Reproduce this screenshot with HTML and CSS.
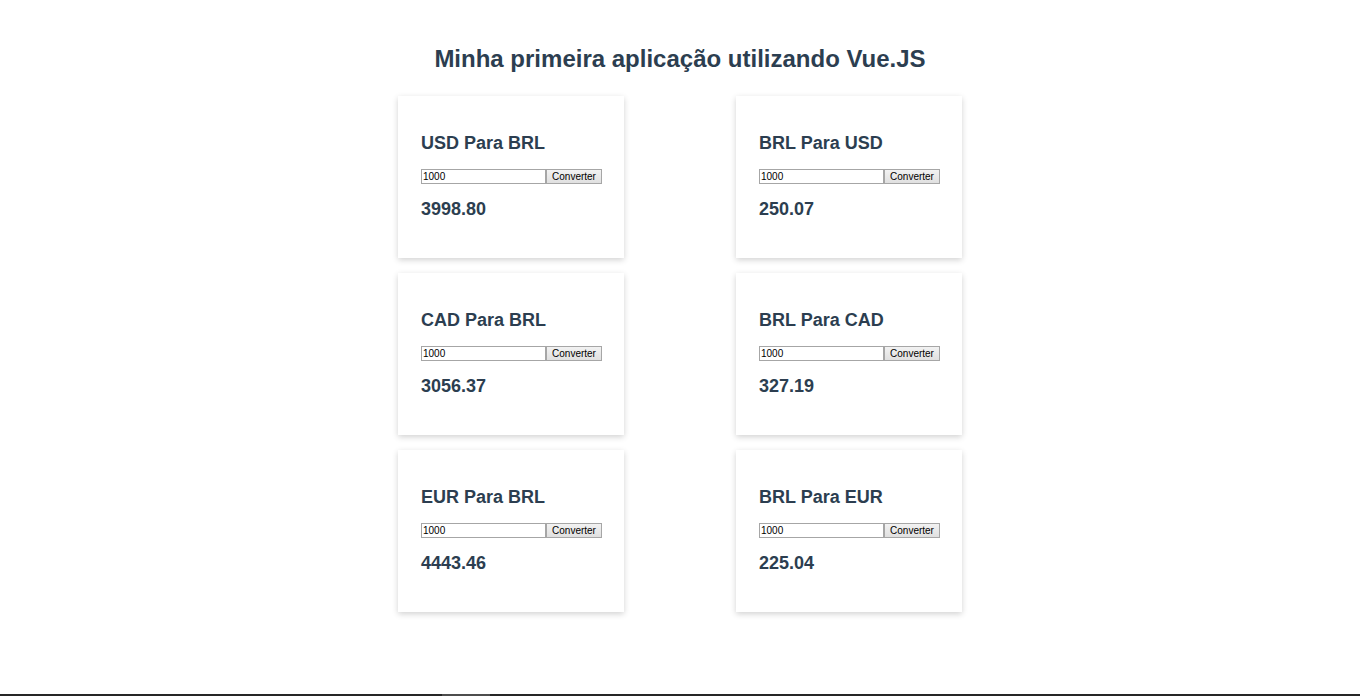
FILE: index.html
```html
<!DOCTYPE html>
<html lang="pt-BR">
<head>
<meta charset="utf-8">
<title>Conversor de Moedas</title>
<link rel="stylesheet" href="styles.css">
</head>
<body>
<div class="page">
  <main class="app">
    <h2 class="title">Minha primeira aplicação utilizando Vue.JS</h2>
    <div class="grid">
      <div class="card">
        <h3 class="card-title">USD Para BRL</h3>
        <div class="form"><input class="field" type="text" value="1000"><button class="btn">Converter</button></div>
        <h3 class="result">3998.80</h3>
      </div>
      <div class="card">
        <h3 class="card-title">BRL Para USD</h3>
        <div class="form"><input class="field" type="text" value="1000"><button class="btn">Converter</button></div>
        <h3 class="result">250.07</h3>
      </div>
      <div class="card">
        <h3 class="card-title">CAD Para BRL</h3>
        <div class="form"><input class="field" type="text" value="1000"><button class="btn">Converter</button></div>
        <h3 class="result">3056.37</h3>
      </div>
      <div class="card">
        <h3 class="card-title">BRL Para CAD</h3>
        <div class="form"><input class="field" type="text" value="1000"><button class="btn">Converter</button></div>
        <h3 class="result">327.19</h3>
      </div>
      <div class="card">
        <h3 class="card-title">EUR Para BRL</h3>
        <div class="form"><input class="field" type="text" value="1000"><button class="btn">Converter</button></div>
        <h3 class="result">4443.46</h3>
      </div>
      <div class="card">
        <h3 class="card-title">BRL Para EUR</h3>
        <div class="form"><input class="field" type="text" value="1000"><button class="btn">Converter</button></div>
        <h3 class="result">225.04</h3>
      </div>
    </div>
  </main>
  <div class="scrollbar"><div class="thumb"></div></div>
</div>
</body>
</html>
```
FILE: styles.css
```css
html, body {
  margin: 0;
  padding: 0;
  background: #ffffff;
}

body {
  font-family: "Liberation Sans", Arial, Helvetica, sans-serif;
  color: #2c3e50;
}

.page {
  min-height: 100vh;
  display: flex;
  flex-direction: column;
}

.app {
  flex: 1;
  display: flex;
  flex-direction: column;
  align-items: center;
}

.title {
  margin: 45px 0 23px;
  font-size: 24px;
  line-height: 28px;
  font-weight: bold;
  text-align: center;
}

.grid {
  display: grid;
  grid-template-columns: 226px 226px;
  column-gap: 112px;
  row-gap: 15px;
}

.card {
  box-sizing: border-box;
  height: 162px;
  padding: 0 23px;
  background: #ffffff;
  box-shadow: 0 2px 6px rgba(0, 0, 0, 0.18);
  display: flex;
  flex-direction: column;
  align-items: flex-start;
}

.card-title,
.result {
  font-size: 18px;
  line-height: 21px;
  font-weight: bold;
}

.card-title {
  margin: 37px 0 0;
}

.form {
  margin-top: 15px;
  display: flex;
  height: 15px;
}

.field {
  box-sizing: border-box;
  width: 125px;
  height: 15px;
  margin: 0;
  padding: 0 1px;
  border: 1px solid #a6a6a6;
  font-family: "Liberation Sans", Arial, sans-serif;
  font-size: 10px;
  color: #000000;
  background: #ffffff;
  outline: none;
}

.btn {
  box-sizing: border-box;
  width: 56px;
  height: 15px;
  margin: 0;
  padding: 0 3px;
  border: 1px solid #a6a6a6;
  background: linear-gradient(#f2f2f2, #e0e0e0);
  font-family: "Liberation Sans", Arial, sans-serif;
  font-size: 10px;
  line-height: 12px;
  color: #000000;
}

.result {
  margin: 15px 0 0;
}

.scrollbar {
  height: 2px;
  background: #262626;
  display: flex;
}

.thumb {
  margin-left: 442px;
  width: 48px;
  background: #4d4d4d;
}
```
